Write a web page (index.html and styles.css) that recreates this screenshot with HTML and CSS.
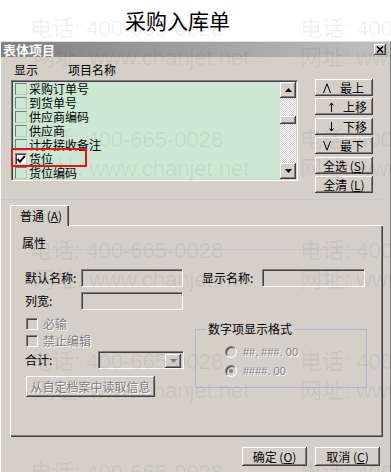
FILE: index.html
```html
<!DOCTYPE html>
<html lang="zh">
<head>
<meta charset="utf-8">
<title>采购入库单</title>
<link rel="stylesheet" href="styles.css">
</head>
<body>
<div class="doc-title">采购入库单</div>
<div class="dialog">
  <div class="titlebar">
    <span>表体项目</span>
    <span class="close"><svg width="8" height="7" viewBox="0 0 8 7"><path d="M1 0.5 L7 6.5 M7 0.5 L1 6.5" stroke="#000" stroke-width="1.6"/></svg></span>
  </div>
  <div class="top">
    <div class="list-col">
      <div class="list-head"><span class="h-show">显示</span><span>项目名称</span></div>
      <div class="list">
        <div class="rows">
          <div class="row"><span class="cb"></span>采购订单号</div>
          <div class="row"><span class="cb"></span>到货单号</div>
          <div class="row"><span class="cb"></span>供应商编码</div>
          <div class="row"><span class="cb"></span>供应商</div>
          <div class="row"><span class="cb"></span>计步接收备注</div>
          <div class="row"><span class="cb checked"><svg width="10" height="10" viewBox="0 0 10 10"><path d="M1.5 5 L4 7.8 L8.8 1.8" fill="none" stroke="#000" stroke-width="2"/></svg></span>货位</div>
          <div class="row"><span class="cb"></span>货位编码</div>
        </div>
        <div class="vscroll">
          <div class="sb-btn"><svg width="7" height="4" viewBox="0 0 7 4"><path d="M0 4 L3.5 0 L7 4Z" fill="#000"/></svg></div>
          <div class="track"><div class="thumb"></div></div>
          <div class="sb-btn"><svg width="7" height="4" viewBox="0 0 7 4"><path d="M0 0 L3.5 4 L7 0Z" fill="#000"/></svg></div>
        </div>
        <div class="highlight"></div>
      </div>
    </div>
    <div class="btn-col">
      <div class="btn mv mv-top"><span class="g g-wide"><svg width="8" height="10" viewBox="0 0 8 10"><path d="M0.5 10 L4 0.8 L7.5 10" fill="none" stroke="#000" stroke-width="1"/></svg></span>最上</div>
      <div class="btn mv mv-mid"><span class="g"><svg width="5" height="10" viewBox="0 0 5 10"><path d="M2.5 1 L2.5 10 M0.5 3.5 L2.5 1 L4.5 3.5" fill="none" stroke="#000" stroke-width="1"/></svg></span>上移</div>
      <div class="btn mv mv-mid gap1"><span class="g"><svg width="5" height="10" viewBox="0 0 5 10"><path d="M2.5 0 L2.5 9 M0.5 6.5 L2.5 9 L4.5 6.5" fill="none" stroke="#000" stroke-width="1"/></svg></span>下移</div>
      <div class="btn mv mv-top"><span class="g g-wide"><svg width="8" height="10" viewBox="0 0 8 10"><path d="M0.5 0 L4 9.2 L7.5 0" fill="none" stroke="#000" stroke-width="1"/></svg></span>最下</div>
      <div class="btn center gap1">全选 (<u>S</u>)</div>
      <div class="btn center">全清 (<u>L</u>)</div>
    </div>
  </div>
  <div class="sep"></div>
  <div class="tabs"><div class="tab">普通 (<u>A</u>)</div></div>
  <div class="panel">
    <div class="attr"><span>属性</span><span class="attr-line"></span></div>
    <div class="form-row">
      <span class="lbl">默认名称:</span><span class="input w1"></span>
      <span class="lbl lbl2">显示名称:</span><span class="input w2"></span>
    </div>
    <div class="form-row row2">
      <span class="lbl lbl-short">列宽:</span><span class="input w1"></span>
    </div>
    <div class="lower">
      <div class="left-col">
        <div class="chk-row"><span class="dcb"></span><span class="dis">必输</span></div>
        <div class="chk-row next"><span class="dcb"></span><span class="dis">禁止编辑</span></div>
        <div class="sum-row"><span class="lbl sum-lbl">合计:</span><span class="combo"><span class="combo-btn"><svg width="7" height="4" viewBox="0 0 7 4"><path d="M0 0 L3.5 4 L7 0Z" fill="#808080"/></svg></span></span></div>
        <div class="btn read-btn"><span class="dis">从自定档案中读取信息</span></div>
      </div>
      <fieldset class="fmt">
        <legend>数字项显示格式</legend>
        <div class="radio-row first"><span class="radio"></span><span class="dis num">##, ###. 00</span></div>
        <div class="radio-row"><span class="radio on"></span><span class="dis num">####. 00</span></div>
      </fieldset>
    </div>
  </div>
  <div class="footer">
    <div class="btn center foot-btn">确定 (<u>O</u>)</div>
    <div class="btn center foot-btn">取消 (<u>C</u>)</div>
  </div>
</div>
<div class="wm">
  <div class="wm-line"><span class="wm-a">电话: 400-665-0028</span><span>电话: 400</span></div>
  <div class="wm-line web"><span class="wm-a">网址: www.chanjet.net</span><span>网址: www</span></div>
  <div class="wm-line pair"><span class="wm-a">电话: 400-665-0028</span><span>电话: 400</span></div>
  <div class="wm-line web"><span class="wm-a">网址: www.chanjet.net</span><span>网址: www</span></div>
  <div class="wm-line pair"><span class="wm-a">电话: 400-665-0028</span><span>电话: 400</span></div>
  <div class="wm-line web"><span class="wm-a">网址: www.chanjet.net</span><span>网址: www</span></div>
  <div class="wm-line pair"><span class="wm-a">电话: 400-665-0028</span><span>电话: 400</span></div>
  <div class="wm-line web"><span class="wm-a">网址: www.chanjet.net</span><span>网址: www</span></div>
  <div class="wm-line pair"><span class="wm-a">电话: 400-665-0028</span><span>电话: 400</span></div>
</div>
</body>
</html>
```
FILE: styles.css
```css
* { box-sizing: border-box; }
html, body { margin: 0; padding: 0; }
body {
  width: 391px; height: 472px; overflow: hidden; position: relative;
  background: #fff; color: #000;
  font-family: "Noto Sans CJK SC", "Liberation Sans", sans-serif;
  font-size: 12px; line-height: 14px;
}
u { text-decoration: underline; text-underline-offset: 1px; }

.doc-title { height: 41px; padding-left: 125px; font-size: 21px; line-height: 40px; }

.dialog {
  height: 431px; background: #d4d0c8;
  border-top: 1px solid #e4e2dc; border-left: 1px solid #fff; border-right: 1px solid #808080;
  display: flex; flex-direction: column;
}
.titlebar {
  height: 15px; flex: none; margin-right: 1px;
  background: linear-gradient(90deg, #808080, #c0c0c0);
  display: flex; align-items: center; justify-content: space-between;
  padding: 0 3px 0 2px; color: #fff; font-weight: bold; font-size: 13px; line-height: 15px;
}
.close {
  width: 12px; height: 11px; background: #d4d0c8;
  box-shadow: inset -1px -1px #404040, inset 1px 1px #fff, inset -2px -2px #808080;
  display: flex; align-items: center; justify-content: center; padding-bottom: 1px;
}

.top { display: flex; padding: 3px 0 0 10px; flex: none; }
.list-col { width: 287px; }
.list-head { height: 20px; display: flex; align-items: center; padding-left: 3px; gap: 30px; }
.list {
  position: relative; width: 287px; height: 101px; display: flex;
  background: #cde8d2;
  border: 1px solid; border-color: #808080 #fff #fff #808080;
  box-shadow: inset 1px 1px #404040, inset -1px -1px #d4d0c8;
  padding: 1px;
}
.rows { flex: 1; overflow: hidden; padding-left: 2px; }
.row { height: 14px; display: flex; align-items: center; gap: 2px; white-space: nowrap; }
.cb {
  width: 12px; height: 12px; flex: none;
  border: 1px solid; border-color: #7a7a7a #b8c8bc #b8c8bc #7a7a7a;
  display: flex; align-items: center; justify-content: center;
}
.cb.checked { background: #fff; border-color: #808080 #d4d0c8 #d4d0c8 #808080; box-shadow: inset 1px 1px #404040; }

.vscroll { width: 16px; display: flex; flex-direction: column; flex: none; }
.sb-btn {
  height: 16px; flex: none; background: #d4d0c8;
  box-shadow: inset -1px -1px #404040, inset 1px 1px #fff, inset -2px -2px #808080;
  display: flex; align-items: center; justify-content: center;
}
.track {
  flex: 1;
  background: repeating-conic-gradient(#fff 0 25%, #d4d0c8 0 50%) 0 0 / 2px 2px;
}
.thumb {
  height: 8px; margin-top: 18px; background: #d4d0c8;
  box-shadow: inset -1px -1px #404040, inset 1px 1px #fff, inset -2px -2px #808080;
}
.highlight {
  position: absolute; left: -1px; top: 67px; width: 76px; height: 19px;
  border: 2px solid #e8141c;
}

.btn-col { margin-left: 17px; padding-top: 19px; display: flex; flex-direction: column; gap: 2px; width: 58px; }
.btn {
  height: 17px; background: #d4d0c8;
  box-shadow: inset -1px -1px #404040, inset 1px 1px #fff, inset -2px -2px #808080;
  display: flex; align-items: center; white-space: nowrap;
}
.btn.center { justify-content: center; }
.gap1 { margin-top: 1px; }
.mv-top { padding-left: 8px; }
.mv-mid { padding-left: 14px; }
.g { display: flex; align-items: center; width: 14px; }
.g-wide { width: 17px; }

.sep { height: 1px; background: #c3c6d4; margin: 6px 8px 0 0; flex: none; }

.tabs { padding-left: 9px; margin-top: 5px; flex: none; }
.tab {
  position: relative; z-index: 1; width: 59px; height: 21px; margin-bottom: -1px;
  background: #d4d0c8; border-top: 1px solid #fff; border-left: 1px solid #fff;
  border-top-left-radius: 2px;
  box-shadow: inset -1px 0 #404040, inset -2px 0 #808080;
  padding-left: 9px; line-height: 19px; white-space: nowrap;
}
.panel {
  margin-left: 9px; width: 373px; height: 212px; flex: none;
  border-top: 1px solid #fff; border-left: 1px solid #fff;
  box-shadow: inset -1px -1px #404040, inset -2px -2px #808080;
  padding: 10px 15px 0 14px;
}
.attr { display: flex; align-items: flex-end; height: 14px; margin-left: -3px; }
.attr-line { flex: 1; height: 1px; background: #c3c6d4; margin: 0 1px 0 4px; }

.form-row { display: flex; align-items: center; height: 18px; margin-top: 19px; }
.form-row.row2 { margin-top: 5px; }
.lbl { width: 56px; white-space: nowrap; }
.lbl2 { width: 60px; margin-left: 19px; }
.input {
  height: 18px; background: #d4d0c8;
  border: 1px solid; border-color: #808080 #fff #fff #808080;
  box-shadow: inset 1px 1px #404040, inset -1px -1px #d4d0c8;
}
.w1 { width: 102px; }
.w2 { width: 103px; }

.lower { display: flex; margin-top: 7px; }
.left-col { width: 170px; }
.chk-row { height: 14px; display: flex; align-items: center; gap: 5px; padding-left: 1px; }
.chk-row.next { margin-top: 3px; }
.dcb {
  width: 12px; height: 12px; background: #d4d0c8;
  border: 1px solid; border-color: #808080 #fff #fff #808080;
  box-shadow: inset 1px 1px #404040;
}
.dis { color: #808080; text-shadow: 1px 1px 0 #fff; }
.sum-row { display: flex; align-items: center; height: 18px; margin-top: 3px; }
.sum-lbl { width: 73px; }
.combo {
  width: 86px; height: 18px; background: #d4d0c8;
  border: 1px solid; border-color: #808080 #fff #fff #808080;
  box-shadow: inset 1px 1px #404040, inset -1px -1px #d4d0c8;
  display: flex; justify-content: flex-end; padding: 2px;
}
.combo-btn {
  width: 16px; height: 14px; background: #d4d0c8;
  box-shadow: inset -1px -1px #404040, inset 1px 1px #fff, inset -2px -2px #808080;
  display: flex; align-items: center; justify-content: center;
}
.read-btn { width: 129px; height: 21px; margin: 7px 0 0 1px; justify-content: center; }

.fmt {
  margin: 5px 0 0 0; padding: 0; width: 172px; height: 66px;
  border: 1px solid #b2b8cb; min-width: 0;
}
.fmt legend { margin-left: 10px; padding: 0 2px; line-height: 14px; }
.radio-row { display: flex; align-items: center; height: 14px; padding-left: 29px; gap: 6px; margin-top: 5px; }
.radio-row.first { margin-top: 9px; }
.radio {
  width: 12px; height: 12px; border-radius: 50%; background: #d4d0c8;
  border: 1px solid; border-color: #808080 #fff #fff #808080;
  box-shadow: inset 1px 1px #404040;
  display: flex; align-items: center; justify-content: center;
}
.radio.on::after { content: ""; width: 4px; height: 4px; border-radius: 50%; background: #808080; }
.num { font-family: "Liberation Sans", sans-serif; font-size: 11px; white-space: pre; }

.footer { display: flex; justify-content: flex-end; gap: 8px; margin-top: 10px; padding-right: 10px; }
.foot-btn { width: 65px; height: 19px; }

.wm {
  position: absolute; left: 0; top: 18px; width: 391px; height: 454px; overflow: hidden; pointer-events: none;
  font-family: "Liberation Sans", "Noto Sans CJK SC", sans-serif;
  font-size: 22px; line-height: 22px; color: rgba(0, 0, 0, 0.065);
}
.wm-line { display: flex; white-space: nowrap; padding-left: 30px; height: 22px; }
.wm-line.web { margin-top: 7px; padding-left: 33px; }
.wm-line.pair { margin-top: 60px; }
.wm-a { width: 270px; flex: none; }
.wm-line.web .wm-a { width: 267px; }
```
